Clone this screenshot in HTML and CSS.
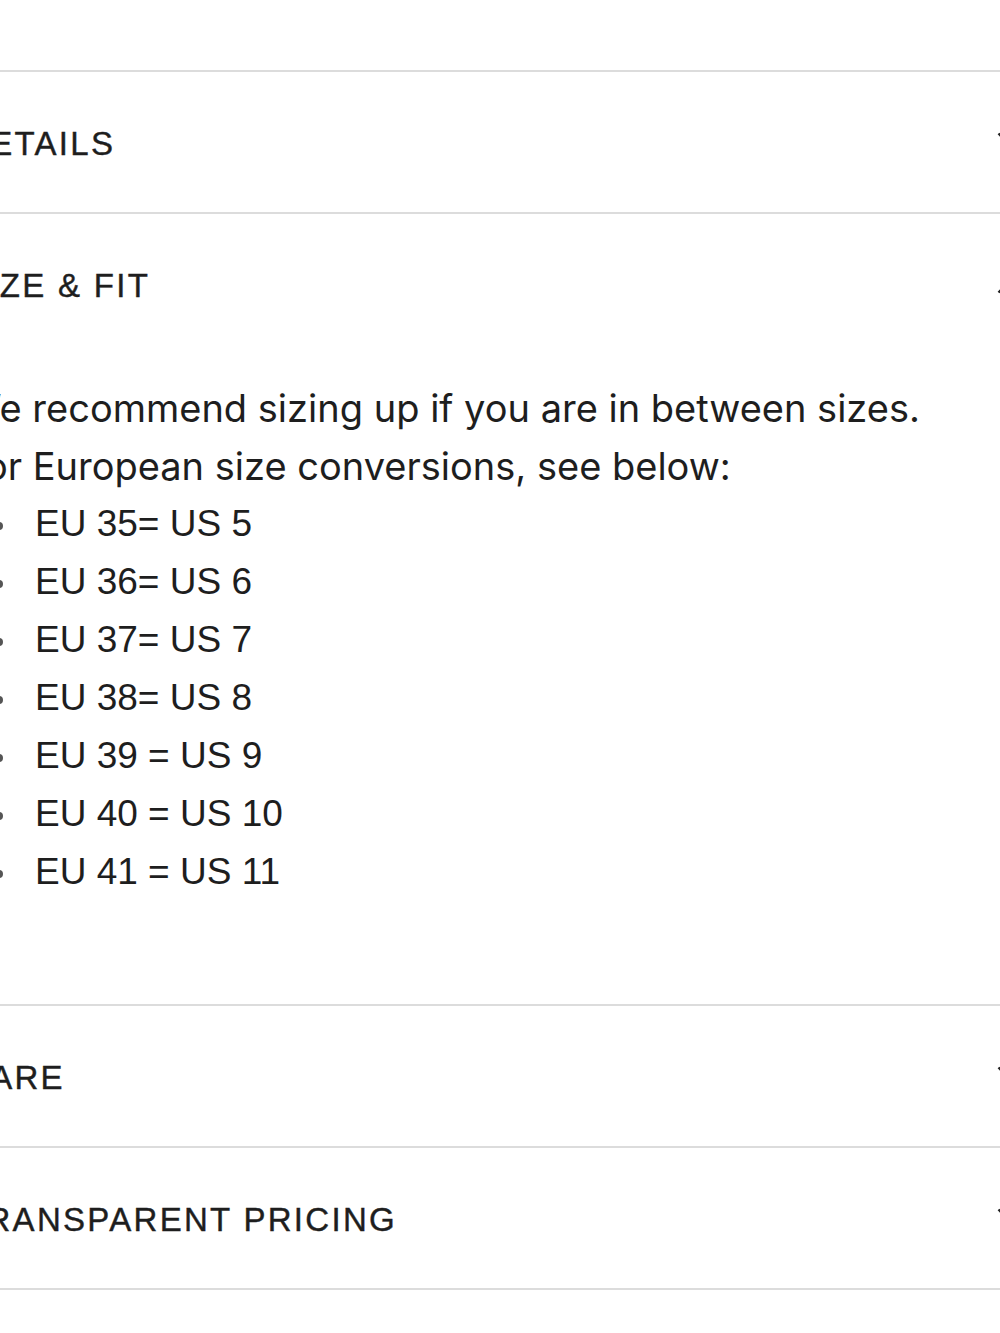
FILE: index.html
```html
<!DOCTYPE html>
<html lang="en">
<head>
<meta charset="utf-8">
<title>Product details</title>
<link rel="stylesheet" href="styles.css">
</head>
<body>
<div class="accordion">
  <section class="item">
    <div class="head">
      <span class="title">DETAILS</span>
      <svg class="chev" viewBox="0 0 36 20" width="36" height="20"><path d="M1.5 1.5 L18 18 L34.5 1.5" fill="none" stroke="#222" stroke-width="2.4"/></svg>
    </div>
  </section>
  <section class="item open">
    <div class="head">
      <span class="title">SIZE &amp; FIT</span>
      <svg class="chev" viewBox="0 0 36 20" width="36" height="20"><path d="M1.5 18.5 L18 2 L34.5 18.5" fill="none" stroke="#222" stroke-width="2.4"/></svg>
    </div>
    <div class="body">
      <p>We recommend sizing up if you are in between sizes.</p>
      <p>For European size conversions, see below:</p>
      <ul class="sizes">
        <li>EU 35= US 5</li>
        <li>EU 36= US 6</li>
        <li>EU 37= US 7</li>
        <li>EU 38= US 8</li>
        <li>EU 39 = US 9</li>
        <li>EU 40 = US 10</li>
        <li>EU 41 = US 11</li>
      </ul>
    </div>
  </section>
  <section class="item">
    <div class="head">
      <span class="title">CARE</span>
      <svg class="chev" viewBox="0 0 36 20" width="36" height="20"><path d="M1.5 1.5 L18 18 L34.5 1.5" fill="none" stroke="#222" stroke-width="2.4"/></svg>
    </div>
  </section>
  <section class="item last">
    <div class="head">
      <span class="title">TRANSPARENT PRICING</span>
      <svg class="chev" viewBox="0 0 36 20" width="36" height="20"><path d="M1.5 1.5 L18 18 L34.5 1.5" fill="none" stroke="#222" stroke-width="2.4"/></svg>
    </div>
  </section>
</div>
</body>
</html>
```

FILE: styles.css
```css
html, body {
  margin: 0;
  padding: 0;
  background: #ffffff;
  overflow: hidden;
}

body {
  width: 1000px;
  height: 1333px;
  color: #222222;
}

.accordion {
  margin-left: -36px;
  width: 1069px;
  padding-top: 70px;
}

.item {
  border-top: 2px solid #dcdcdc;
}

.item.last {
  border-bottom: 2px solid #dcdcdc;
}

.head {
  height: 140px;
  display: flex;
  align-items: center;
  justify-content: space-between;
}

.title {
  font-family: "Liberation Sans", Arial, sans-serif;
  font-size: 33px;
  letter-spacing: 2.3px;
  color: #1e1e1e;
  -webkit-text-stroke: 0.4px #1e1e1e;
  padding-top: 3px;
}

.chev {
  display: block;
}

.body {
  padding: 25px 0 103px 0;
  font-family: "Inter", "Noto Sans", sans-serif;
  font-size: 38px;
  line-height: 58px;
  color: #1e1e1e;
}

.body p {
  margin: 0;
}

.sizes {
  list-style: none;
  margin: 0;
  padding-left: 71px;
  font-family: "Liberation Sans", Arial, sans-serif;
  font-size: 37px;
  letter-spacing: 0;
}

.sizes li::before {
  content: "";
  display: inline-block;
  width: 8px;
  height: 8px;
  border-radius: 50%;
  background: #555555;
  margin-left: -40px;
  margin-right: 32px;
  vertical-align: middle;
}
```
